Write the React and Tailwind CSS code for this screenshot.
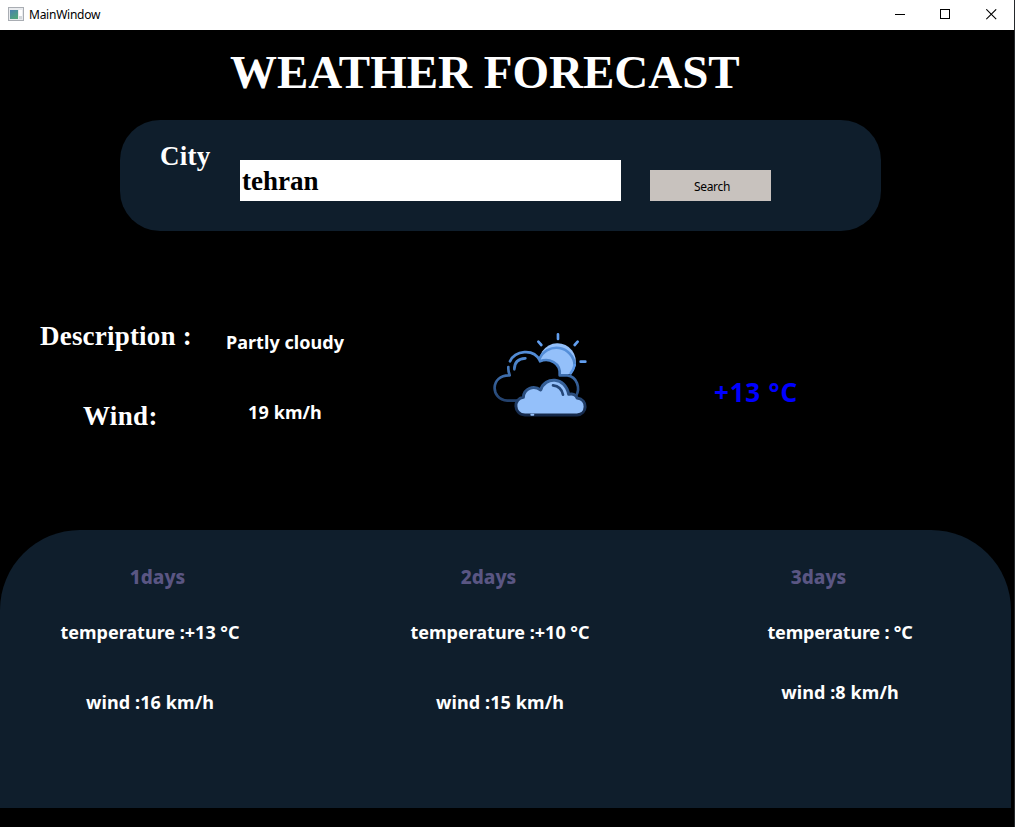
import React from "react";

const SERIF = "font-['Liberation_Serif',serif] font-bold";
const SANS = "font-['Noto_Sans',sans-serif]";

function TitleBar() {
  return (
    <header className="flex h-[30px] items-center bg-white text-black">
      <svg className="ml-2 mb-[2px] h-[14px] w-[16px] shrink-0" viewBox="0 0 16 14">
        <defs>
          <linearGradient id="pane" x1="0" y1="0" x2="0.6" y2="1">
            <stop offset="0" stopColor="#4a7fb0" />
            <stop offset="1" stopColor="#4fa57c" />
          </linearGradient>
        </defs>
        <rect x="0.5" y="0.5" width="15" height="13" fill="#e9ebee" stroke="#a9adb3" />
        <rect x="2" y="3" width="8" height="9" fill="url(#pane)" />
        <rect x="11" y="3" width="3" height="6" fill="#fff" />
        <rect x="11" y="9" width="3" height="3" fill="#d4d8dc" />
      </svg>
      <span className={`${SANS} ml-[5px] text-[12px] leading-[16px] tracking-[-0.25px]`}>MainWindow</span>
      <div className="mb-px ml-auto mr-[17px] flex">
        <svg className="mr-[34px] h-[11px] w-[11px]" viewBox="0 0 11 11"><path d="M0 5.5H10" stroke="#000" /></svg>
        <svg className="mr-[35px] h-[11px] w-[11px]" viewBox="0 0 11 11"><rect x="0.5" y="0.5" width="9" height="9" fill="none" stroke="#000" /></svg>
        <svg className="h-[11px] w-[11px]" viewBox="0 0 11 11"><path d="M0.3 0.3L10.2 10.2M10.2 0.3L0.3 10.2" stroke="#000" strokeWidth="1.1" /></svg>
      </div>
    </header>
  );
}

function PartlyCloudy() {
  return (
    <svg className="h-[100px] w-[120px]" viewBox="0 0 360 300" fill="none" strokeLinecap="round" strokeLinejoin="round">
      <defs>
        <linearGradient id="ink" gradientUnits="userSpaceOnUse" x1="0" y1="25" x2="0" y2="272">
          <stop offset="0" stopColor="#629ff0" />
          <stop offset="0.35" stopColor="#4d85cc" />
          <stop offset="0.65" stopColor="#31598f" />
          <stop offset="1" stopColor="#142747" />
        </linearGradient>
      </defs>
      <g stroke="#629ff0" strokeWidth="8">
        <path d="M233.900 28L234 42M175 50L184 60M293 50L284 60M302 110L316 110.100" />
      </g>
      <path d="M178 103A55 55 0 1 1 272 148L240 148Z" fill="#94c0fa" />
      <path d="M178 103A55 55 0 0 1 284 120" stroke="url(#ink)" strokeWidth="8" />
      <path d="M284 120Q280 136 272 145" stroke="#5b97e6" strokeWidth="8" />
      <path d="M92 150L178 112Q235 90 240 150L262 151C300 155 305 195 286 216L110 227H82C30 220 35 152 92 150Z" fill="#000" />
      <g stroke="url(#ink)" strokeWidth="8">
        <path d="M90 109C105 77 160 68 180 107" />
        <path d="M85 126Q84 138 89 151C30 149 30 224 82 227H110" />
        <path d="M180 109C205 98 244 112 239 151H262C291 155 302 189 288 213" />
        <path d="M103 133C103 113 115 101 136 100" />
      </g>
      <path d="M135 270C99 268 100 220 130 217C132 190 161 180 182 195C194 154 256 154 266 208C278 204 289 210 291 219C325 224 322 268 291 270Z" fill="#94c0fa" stroke="url(#ink)" strokeWidth="9" />
      <path d="M219 181Q244 184 249 209" stroke="#244678" strokeWidth="8" />
      <path d="M154 269H160" stroke="#94c0fa" strokeWidth="6" />
    </svg>
  );
}

function Day({ title, temperature, wind, className, titleClass, temperatureClass, windClass }) {
  return (
    <section className={`${SANS} flex flex-col items-center text-[18px] leading-[24px] text-white ${className}`}>
      <h2 className={`text-[19px] font-extrabold text-[#5a5683] ${titleClass}`}>{title}</h2>
      <p className={`mt-[31px] flex w-[180px] justify-center overflow-hidden font-bold whitespace-nowrap ${temperatureClass}`}>{temperature}</p>
      <p className={`font-bold tracking-[0.1px] whitespace-nowrap ${windClass}`}>{wind}</p>
    </section>
  );
}

export default function App() {
  return (
    <div className="flex h-[827px] w-[1015px] flex-col overflow-hidden border-r border-[#25282b] bg-black">
      <TitleBar />
      <h1 className={`${SERIF} ml-[230px] mt-[12px] h-[60px] text-[47px] leading-[60px] whitespace-nowrap text-white`}>WEATHER FORECAST</h1>
      <form className="ml-[120px] mt-[18px] flex h-[111px] w-[761px] items-start rounded-[40px] bg-[#0f1e2c]" onSubmit={(e) => e.preventDefault()}>
        <label htmlFor="city" className={`${SERIF} ml-[40px] mt-[21px] w-[80px] text-[27px] leading-[30px] tracking-[0.25px] text-white`}>City</label>
        <input id="city" defaultValue="tehran" className={`${SERIF} mt-[40px] h-[41px] w-[381px] bg-white px-[2px] pt-[2px] text-[27px] text-black outline-none`} />
        <button className={`${SANS} ml-[29px] mt-[50px] h-[31px] w-[121px] bg-[#c8c2be] pt-[2px] pl-[3px] text-[12px] tracking-[-0.3px] text-black`}>Search</button>
      </form>
      <main className="flex h-[299px] items-start">
        <dl className="ml-[40px] mt-[90px] grid grid-cols-[152px_186px] grid-rows-[80px_40px] text-white">
          <dt className={`${SERIF} text-[27px] leading-[30px] tracking-[0.2px] whitespace-nowrap`}>Description :</dt>
          <dd className={`${SANS} mt-[9px] text-center text-[18px] font-bold leading-[24px] tracking-[0.05px]`}>Partly cloudy</dd>
          <dt className={`${SERIF} pl-[43px] text-[27px] leading-[30px] tracking-[0.35px]`}>Wind:</dt>
          <dd className={`${SANS} -mt-px text-center text-[18px] font-bold leading-[24px] tracking-[0.1px]`}>19 km/h</dd>
        </dl>
        <div className="ml-[102px] mt-[94px]"><PartlyCloudy /></div>
        <p className={`${SANS} ml-[114px] mt-[143px] text-[26px] font-bold leading-[36px] tracking-[0.8px] whitespace-nowrap text-[#0000ff]`}>+13 °C</p>
      </main>
      <div className="flex h-[278px] w-[1011px] items-start rounded-t-[80px] bg-[#0f1e2c] pt-[35px]">
        <Day title="1days" temperature="temperature :+13 °C" wind="wind :16 km/h" className="ml-[50px] w-[200px]" titleClass="ml-[15px]" temperatureClass="tracking-normal" windClass="mt-[46px]" />
        <Day title="2days" temperature="temperature :+10 °C" wind="wind :15 km/h" className="ml-[150px] w-[200px]" titleClass="mr-[23px]" temperatureClass="tracking-normal" windClass="mt-[46px]" />
        <Day title="3days" temperature="temperature : °C" wind="wind :8 km/h" className="ml-[140px] w-[200px]" titleClass="mr-[43px]" temperatureClass="tracking-[-0.2px]" windClass="mt-[36px]" />
      </div>
    </div>
  );
}
